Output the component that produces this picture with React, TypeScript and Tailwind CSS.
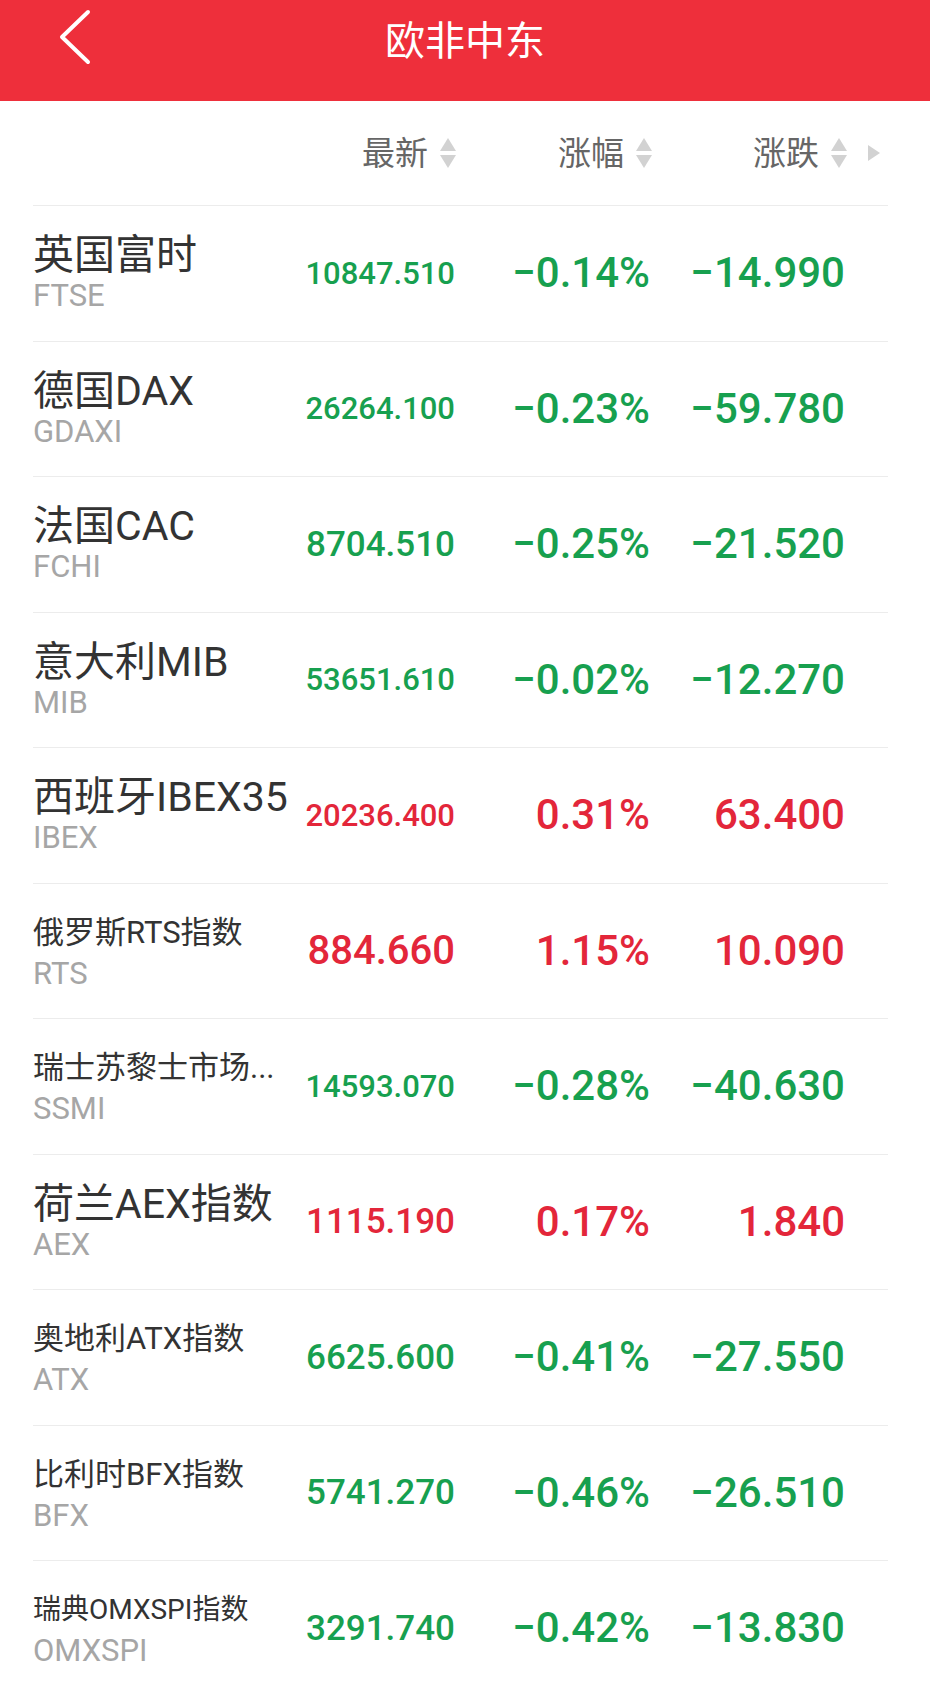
type Quote = {
  name: string;
  code: string;
  nameSize: string;
  price: string;
  priceSize: string;
  pct: string;
  chg: string;
  up: boolean;
};

const quotes: Quote[] = [
  { name: '英国富时', code: 'FTSE', nameSize: 'text-[41px]', price: '10847.510', priceSize: 'text-[31px]', pct: '−0.14%', chg: '−14.990', up: false },
  { name: '德国DAX', code: 'GDAXI', nameSize: 'text-[41px]', price: '26264.100', priceSize: 'text-[31px]', pct: '−0.23%', chg: '−59.780', up: false },
  { name: '法国CAC', code: 'FCHI', nameSize: 'text-[41px]', price: '8704.510', priceSize: 'text-[35px]', pct: '−0.25%', chg: '−21.520', up: false },
  { name: '意大利MIB', code: 'MIB', nameSize: 'text-[41px]', price: '53651.610', priceSize: 'text-[31px]', pct: '−0.02%', chg: '−12.270', up: false },
  { name: '西班牙IBEX35', code: 'IBEX', nameSize: 'text-[41px]', price: '20236.400', priceSize: 'text-[31px]', pct: '0.31%', chg: '63.400', up: true },
  { name: '俄罗斯RTS指数', code: 'RTS', nameSize: 'text-[31px]', price: '884.660', priceSize: 'text-[40px]', pct: '1.15%', chg: '10.090', up: true },
  { name: '瑞士苏黎士市场...', code: 'SSMI', nameSize: 'text-[31px]', price: '14593.070', priceSize: 'text-[31px]', pct: '−0.28%', chg: '−40.630', up: false },
  { name: '荷兰AEX指数', code: 'AEX', nameSize: 'text-[41px]', price: '1115.190', priceSize: 'text-[35px]', pct: '0.17%', chg: '1.840', up: true },
  { name: '奥地利ATX指数', code: 'ATX', nameSize: 'text-[31px]', price: '6625.600', priceSize: 'text-[35px]', pct: '−0.41%', chg: '−27.550', up: false },
  { name: '比利时BFX指数', code: 'BFX', nameSize: 'text-[31px]', price: '5741.270', priceSize: 'text-[35px]', pct: '−0.46%', chg: '−26.510', up: false },
  { name: '瑞典OMXSPI指数', code: 'OMXSPI', nameSize: 'text-[28px]', price: '3291.740', priceSize: 'text-[35px]', pct: '−0.42%', chg: '−13.830', up: false },
];

const SortIcon = () => (
  <svg width="18" height="31" viewBox="0 0 18 31" className="shrink-0">
    <path d="M9 0 L17 13 H1 Z" fill="#d2d2d2" />
    <path d="M1 17 H17 L9 30 Z" fill="#d2d2d2" />
  </svg>
);

const HeadCell = ({ label }: { label: string }) => (
  <div className="flex items-center justify-end gap-[11px] pr-[-2px]">
    <span className="text-[33px] leading-none text-[#666]">{label}</span>
    <SortIcon />
  </div>
);

const Row = ({ q }: { q: Quote }) => {
  const color = q.up ? 'text-[#e3263a]' : 'text-[#17a04f]';
  return (
    <div className="grid h-[135.5px] grid-cols-[257px_165px_195px_195px_1fr] items-center border-t border-[#ececec]">
      <div className="flex flex-col justify-center">
        <span className={`${q.nameSize} whitespace-nowrap leading-[46px] text-[#333]`}>{q.name}</span>
        <span className="text-[31px] leading-[36px] text-[#a6a6a6]">{q.code}</span>
      </div>
      <div className={`${q.priceSize} ${color} text-right font-medium leading-none`}>{q.price}</div>
      <div className={`text-[42px] ${color} text-right font-medium leading-none`}>{q.pct}</div>
      <div className={`text-[42px] ${color} text-right font-medium leading-none`}>{q.chg}</div>
      <div />
    </div>
  );
};

export default function App() {
  return (
    <div className="min-h-screen bg-white font-[Roboto,'Noto_Sans_CJK_SC',sans-serif]">
      {/* 顶部标题栏 */}
      <div className="grid h-[101px] grid-cols-[1fr_auto_1fr] items-start bg-[#ee2f3b]">
        <div className="pl-[58px] pt-[8px]">
          <svg width="34" height="58" viewBox="0 0 34 58" fill="none">
            <path d="M30 4 L4 29 L30 54" stroke="white" strokeWidth="4" strokeLinecap="round" strokeLinejoin="round" />
          </svg>
        </div>
        <div className="pt-[18px] text-[40px] leading-[48px] text-white">欧非中东</div>
        <div />
      </div>

      <div className="ml-[33px] mr-[42px]">
        {/* 表头 */}
        <div className="grid h-[104px] grid-cols-[257px_167px_196px_195px_1fr] items-center">
          <div />
          <HeadCell label="最新" />
          <HeadCell label="涨幅" />
          <HeadCell label="涨跌" />
          <div className="pl-[20px]">
            <svg width="12" height="16" viewBox="0 0 12 16">
              <path d="M0 0 L12 8 L0 16 Z" fill="#d2d2d2" />
            </svg>
          </div>
        </div>

        {quotes.map((q) => (
          <Row key={q.code} q={q} />
        ))}
      </div>
    </div>
  );
}
